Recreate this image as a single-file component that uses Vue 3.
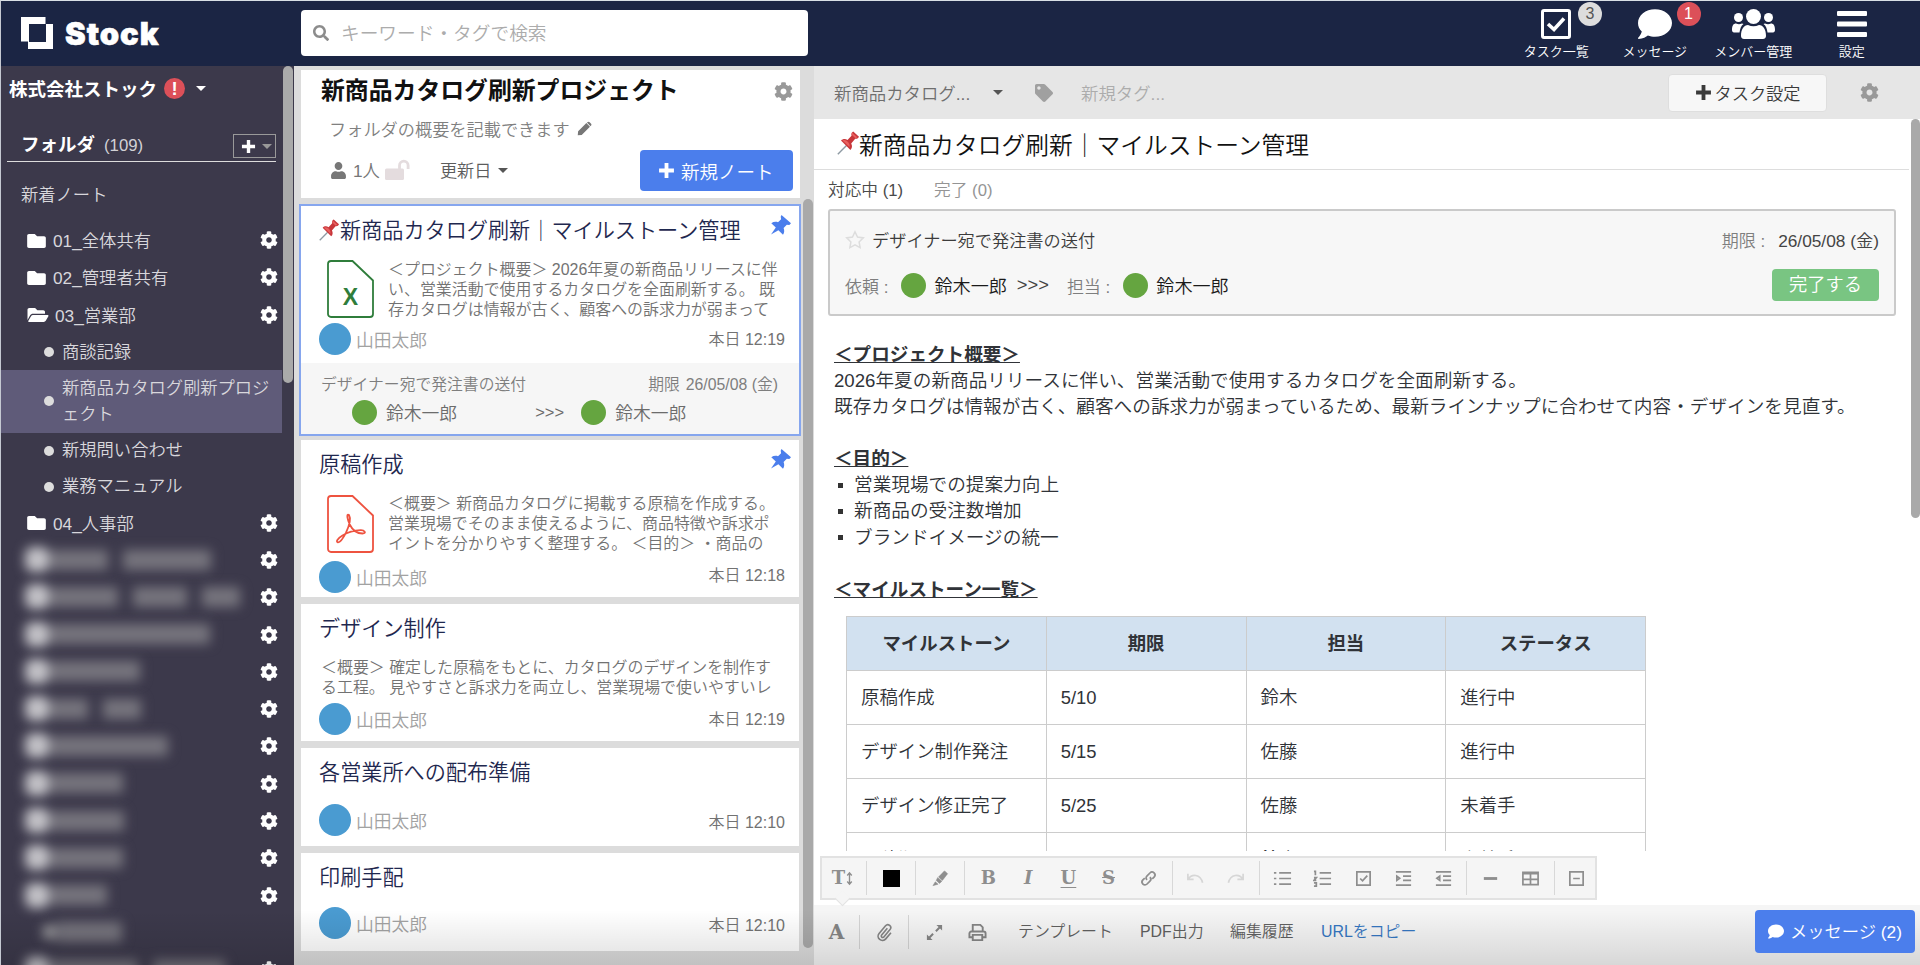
<template>
  <div class="page">
    <header class="header-bar">
      <div class="logo">
        <svg class="logo-mark" viewBox="0 0 32 32">
          <path d="M0 0H25V7H32V32H7V25H0ZM8 7V25H25V7Z" fill="#fff" fill-rule="evenodd" />
          <path d="M25 0V7M0 25H7" stroke="#1b2544" stroke-width="1" />
        </svg>
        <span class="logo-text">Stock</span>
      </div>
      <div class="search-box">
        <Icon name="search" class="search-icon" />
        <span>キーワード・タグで検索</span>
      </div>
      <nav class="header-nav">
        <div class="nav-item">
          <svg class="nav-icon" viewBox="0 0 30 30" fill="none" stroke="#fff">
            <rect x="1.500" y="1.500" width="27" height="27" rx="1.500" stroke-width="3" />
            <path d="M7 15l6 5.500L23 9.500" stroke-width="3.600" />
          </svg>
          <span class="badge gray">3</span>
          <span>タスク一覧</span>
        </div>
        <div class="nav-item">
          <Icon name="comment" class="nav-icon bubble" />
          <span class="badge red">1</span>
          <span>メッセージ</span>
        </div>
        <div class="nav-item">
          <svg class="nav-icon members" viewBox="0 0 43 30" fill="#fff">
            <circle cx="21.500" cy="7.500" r="7.500" />
            <circle cx="6.500" cy="8.500" r="4.500" />
            <circle cx="36.500" cy="8.500" r="4.500" />
            <path d="M9 27c0-7 3-11 7-11 3.500 1.700 7.500 1.700 11 0 4 0 7 4 7 11 0 2-1.500 3-3 3H12c-1.500 0-3-1-3-3z" />
            <path d="M0 21c0-4.500 1.500-6.500 4-6.500 2 1 4 1 6 0l1.500.6C9 17 8 20 7.500 23.500H2C.8 23.500 0 22.500 0 21zM43 21c0-4.500-1.500-6.500-4-6.500-2 1-4 1-6 0l-1.500.6C34 17 35 20 35.500 23.500H41c1.200 0 2-1 2-2.500z" />
          </svg>
          <span>メンバー管理</span>
        </div>
        <div class="nav-item">
          <svg class="nav-icon" viewBox="0 0 30 30" fill="#fff">
            <rect y="2" width="30" height="5" rx="1" />
            <rect y="12.500" width="30" height="5" rx="1" />
            <rect y="23" width="30" height="5" rx="1" />
          </svg>
          <span>設定</span>
        </div>
      </nav>
    </header>

    <div class="columns">
      <aside class="sidebar">
        <div class="sidebar-scroll">
          <div class="company">
            <span>株式会社ストック</span>
            <span class="alert">!</span>
            <span class="caret"></span>
          </div>
          <div class="folder-head">
            <span class="folder-title">フォルダ</span>
            <span class="folder-count">(109)</span>
            <div class="add-folder">
              <Icon name="plus" class="add-icon" />
              <span class="caret dim"></span>
            </div>
          </div>
          <div class="new-notes">新着ノート</div>
          <template v-for="folder in folders" :key="folder.name">
            <div class="folder-row">
              <Icon :name="folder.open ? 'folderOpen' : 'folder'" :class="folder.open ? 'folder-icon open' : 'folder-icon'" />
              <span class="folder-name">{{ folder.name }}</span>
              <Icon name="cog" class="row-cog" />
            </div>
            <div v-for="sub in folder.children" :key="sub" class="sub-row" :class="{ active: sub === activeFolder }">
              <span class="dot"></span>
              <span class="sub-name">{{ sub }}</span>
            </div>
          </template>
          <div v-for="(row, i) in maskedRows" :key="i" class="folder-row masked">
            <div class="mask" :class="{ child: row.child }">
              <span class="mask-icon"></span>
              <span v-for="(w, j) in row.widths" :key="j" class="mask-text" :style="{ width: w + 'px' }"></span>
            </div>
            <Icon v-if="!row.child" name="cog" class="row-cog" />
          </div>
        </div>
        <div class="sidebar-thumb"></div>
      </aside>

      <section class="note-list">
        <div class="cards">
          <div class="list-head">
            <div class="list-title">
              <h1>新商品カタログ刷新プロジェクト</h1>
              <Icon name="cog" class="gray-cog" />
            </div>
            <div class="list-desc">
              <span>フォルダの概要を記載できます</span>
              <Icon name="pencil" class="pencil" />
            </div>
            <div class="list-tools">
              <Icon name="user" class="user-icon" />
              <span class="user-count">1人</span>
              <svg class="lock" viewBox="0 0 25 21">
                <rect y="9.500" width="19" height="11.500" rx="1.500" fill="#e4dcde" />
                <path d="M14.500 10V6.500a4.300 4.300 0 0 1 8.600 0V10" fill="none" stroke="#e4dcde" stroke-width="2.800" />
              </svg>
              <span class="sort">更新日</span>
              <span class="caret dark"></span>
              <div class="new-note">
                <Icon name="plus" class="new-plus" />
                <span>新規ノート</span>
              </div>
            </div>
          </div>

          <article v-for="note in notes" :key="note.title" class="card" :class="note.kind">
            <div class="card-title">
              <PushPin v-if="note.kind === 'selected'" class="emoji" />
              <span>{{ note.title }}</span>
              <Icon v-if="note.pinned" name="pin" class="pin" />
            </div>
            <div v-if="note.preview" class="card-body">
              <svg v-if="note.file" class="file-icon" :class="note.file" viewBox="0 0 47 58" fill="none" stroke="currentColor" stroke-width="1.800">
                <path d="M4 1H25.500L46 20.500V54a3 3 0 0 1-3 3H4a3 3 0 0 1-3-3V4a3 3 0 0 1 3-3z" />
                <text v-if="note.file === 'excel'" x="23.500" y="45" text-anchor="middle" class="file-letter">X</text>
                <path v-else d="M22 20c-3-2-1.500 5 1 10 3 6 8 8.500 12.500 8.500s2-3.500-2-3.300c-6 .3-13 2.300-18 5.300-5 3-6.500 6-5 6.700 2 .8 5.500-3.500 8.500-9.500 3-6.500 5.200-14 3-17.700z" />
              </svg>
              <div class="preview">
                <div v-for="line in note.preview" :key="line">{{ line }}</div>
              </div>
            </div>
            <div class="card-meta">
              <span class="avatar blue"></span>
              <span class="author">山田太郎</span>
              <span class="time">{{ note.time }}</span>
            </div>
            <div v-if="note.task" class="card-task">
              <div class="task-line">
                <span>{{ note.task }}</span>
                <span class="due"><span>期限</span>26/05/08 (金)</span>
              </div>
              <div class="task-people">
                <span class="avatar green"></span>
                <span class="from">鈴木一郎</span>
                <span class="arrows">&gt;&gt;&gt;</span>
                <span class="avatar green"></span>
                <span>鈴木一郎</span>
              </div>
            </div>
          </article>
        </div>
        <div class="list-thumb"></div>
      </section>

      <main class="note">
        <div class="note-bar">
          <span class="crumb">新商品カタログ...</span>
          <span class="caret dark"></span>
          <Icon name="tag" class="tag-icon" />
          <span class="new-tag">新規タグ...</span>
          <div class="task-button">
            <Icon name="plus" class="task-plus" />
            <span>タスク設定</span>
          </div>
          <Icon name="cog" class="gray-cog" />
        </div>

        <div class="note-main">
          <div class="note-scroll">
            <h2 class="note-title"><PushPin class="emoji" />新商品カタログ刷新｜マイルストーン管理</h2>
            <div class="tabs">
              <span>対応中 (1)</span>
              <span class="done">完了 (0)</span>
            </div>
            <div class="task-card">
              <div class="task-top">
                <svg class="star" viewBox="0 0 20 20" fill="none" stroke="#ddd" stroke-width="1.500">
                  <path d="M10 1.800l2.500 5.300 5.800.8-4.200 4 1 5.800-5.100-2.800-5.100 2.800 1-5.800-4.200-4 5.800-.8z" />
                </svg>
                <span class="task-name">デザイナー宛で発注書の送付</span>
                <span class="label">期限 :</span>
                <span class="date">26/05/08 (金)</span>
              </div>
              <div class="task-bottom">
                <span class="label">依頼 :</span>
                <span class="avatar green"></span>
                <span class="person">鈴木一郎</span>
                <span class="gt">&gt;&gt;&gt;</span>
                <span class="label">担当 :</span>
                <span class="avatar green"></span>
                <span class="person">鈴木一郎</span>
                <div class="complete">完了する</div>
              </div>
            </div>
            <div class="document">
              <h3>＜プロジェクト概要＞</h3>
              <p>2026年夏の新商品リリースに伴い、営業活動で使用するカタログを全面刷新する。</p>
              <p>既存カタログは情報が古く、顧客への訴求力が弱まっているため、最新ラインナップに合わせて内容・デザインを見直す。</p>
              <h3 class="spaced">＜目的＞</h3>
              <ul>
                <li>営業現場での提案力向上</li>
                <li>新商品の受注数増加</li>
                <li>ブランドイメージの統一</li>
              </ul>
              <h3 class="spaced">＜マイルストーン一覧＞</h3>
              <table>
                <thead>
                  <tr>
                    <th>マイルストーン</th>
                    <th>期限</th>
                    <th>担当</th>
                    <th>ステータス</th>
                  </tr>
                </thead>
                <tbody>
                  <tr v-for="row in milestones" :key="row[0]">
                    <td v-for="(cell, i) in row" :key="i">{{ cell }}</td>
                  </tr>
                </tbody>
              </table>
            </div>
          </div>
          <div class="note-thumb"></div>
        </div>

        <div class="editor">
          <div class="toolbar">
            <div v-for="(group, i) in tools" :key="i" class="tool-group" :class="{ narrow: group.length === 1 }">
              <span v-for="tool in group" :key="tool" class="tool" :class="tool">
                <template v-if="letters[tool]">{{ letters[tool] }}</template>
                <svg v-if="toolPaths[tool]" viewBox="0 0 20 20" fill="none" stroke="currentColor" stroke-width="1.800">
                  <path :d="toolPaths[tool]" />
                </svg>
              </span>
            </div>
          </div>
        </div>

        <footer class="bottom-bar">
          <span class="foot-icon font-a">A</span>
          <span class="foot-icon clip">
            <svg viewBox="0 0 20 20" fill="none" stroke="currentColor" stroke-width="1.700">
              <path d="M13 5.500l-6 7.200a1.500 1.500 0 0 0 2.300 2l6.500-7.800a3 3 0 0 0-4.700-3.900L4.300 11a4.500 4.500 0 0 0 7 5.700l5.500-6.500" />
            </svg>
          </span>
          <span class="foot-icon expand">
            <svg viewBox="0 0 20 20" fill="currentColor">
              <path d="M12 2h6v6l-2.200-2.200-3.600 3.600-1.500-1.500 3.600-3.600zM8 18H2v-6l2.200 2.200 3.600-3.600 1.500 1.500-3.600 3.600z" />
            </svg>
          </span>
          <span class="foot-icon print">
            <svg viewBox="0 0 20 20" fill="none" stroke="currentColor" stroke-width="2">
              <path d="M5 9V2h8l2.500 2.500V9M4.500 15H1.500v-4a2 2 0 0 1 2-2h13a2 2 0 0 1 2 2v4h-3M5 12.500h10V18H5z" />
            </svg>
          </span>
          <span class="foot-link template-link">テンプレート</span>
          <span class="foot-link pdf-link">PDF出力</span>
          <span class="foot-link history-link">編集履歴</span>
          <span class="foot-link url-link">URLをコピー</span>
          <div class="message-button">
            <Icon name="comment" class="message-icon" />
            <span>メッセージ (2)</span>
          </div>
        </footer>
      </main>
    </div>
    <div class="bottom-shade"></div>
  </div>
</template>

<script setup>
import { h, ref } from 'vue'

const iconPaths = {
  search: ['0 0 512 512', 'M505 442.700L405.300 343c-4.500-4.500-10.600-7-17-7H372c27.600-35.300 44-79.700 44-128C416 93.100 322.900 0 208 0S0 93.100 0 208s93.100 208 208 208c48.300 0 92.700-16.400 128-44v16.300c0 6.400 2.500 12.500 7 17l99.700 99.700c9.400 9.400 24.600 9.400 33.900 0l28.300-28.300c9.400-9.400 9.400-24.600.1-34zM208 336c-70.700 0-128-57.200-128-128 0-70.700 57.200-128 128-128 70.700 0 128 57.200 128 128 0 70.700-57.200 128-128 128z'],
  comment: ['0 32 512 448', 'M256 32C114.600 32 0 125.100 0 240c0 49.600 21.400 95 57 130.700C44.500 421.100 2.700 466 2.200 466.500c-2.200 2.300-2.800 5.700-1.500 8.700S4.800 480 8 480c66.300 0 116-31.800 140.600-51.400 32.700 12.300 69 19.400 107.400 19.400 141.400 0 256-93.100 256-208S397.400 32 256 32z'],
  cog: ['0 0 512 512', 'M487.400 315.700l-42.600-24.600c4.300-23.200 4.300-47 0-70.200l42.600-24.600c4.900-2.800 7.100-8.600 5.500-14-11.100-35.600-30-67.800-54.700-94.600-3.800-4.100-10-5.100-14.800-2.300L380.800 110c-17.900-15.400-38.500-27.300-60.800-35.100V25.800c0-5.600-3.900-10.500-9.400-11.700-36.700-8.200-74.300-7.800-109.200 0-5.500 1.200-9.400 6.100-9.400 11.700V75c-22.200 7.900-42.800 19.800-60.800 35.100L88.700 85.500c-4.900-2.800-11-1.900-14.800 2.300-24.700 26.700-43.600 58.900-54.700 94.600-1.700 5.400.6 11.200 5.500 14L67.300 221c-4.300 23.200-4.300 47 0 70.200l-42.600 24.600c-4.900 2.800-7.100 8.600-5.500 14 11.100 35.600 30 67.800 54.700 94.600 3.800 4.100 10 5.100 14.800 2.300l42.600-24.600c17.900 15.400 38.500 27.300 60.800 35.100v49.200c0 5.600 3.900 10.500 9.400 11.700 36.700 8.200 74.300 7.800 109.200 0 5.500-1.200 9.400-6.100 9.400-11.700v-49.200c22.200-7.900 42.800-19.800 60.800-35.100l42.600 24.600c4.900 2.800 11 1.900 14.800-2.300 24.700-26.700 43.600-58.900 54.700-94.600 1.500-5.500-.7-11.300-5.600-14.100zM256 336c-44.100 0-80-35.900-80-80s35.900-80 80-80 80 35.900 80 80-35.900 80-80 80z'],
  folder: ['0 64 512 384', 'M464 128H272l-64-64H48C21.490 64 0 85.490 0 112v288c0 26.510 21.490 48 48 48h416c26.510 0 48-21.490 48-48V176c0-26.510-21.490-48-48-48z'],
  folderOpen: ['0 64 576 384', 'M572.694 292.093L500.270 416.248A63.997 63.997 0 0 1 444.989 448H45.025c-18.523 0-30.064-20.093-20.731-36.093l72.424-124.155A64 64 0 0 1 152 256h399.964c18.523 0 30.064 20.093 20.730 36.093zM152 224h328v-48c0-26.510-21.490-48-48-48H272l-64-64H48C21.490 64 0 85.490 0 112v278.046l69.077-118.418C86.214 242.250 117.989 224 152 224z'],
  user: ['0 0 448 512', 'M224 240c66 0 116-53 116-120S290 0 224 0 108 53 108 120s50 120 116 120zM314 280h-17c-46 21-100 21-146 0h-17C60 280 0 348 0 422v42c0 26 21 48 48 48h352c27 0 48-22 48-48v-42c0-74-60-142-134-142z'],
  tag: ['0 0 512 512', 'M0 252.118V48C0 21.490 21.490 0 48 0h204.118a48 48 0 0 1 33.941 14.059l211.882 211.882c18.745 18.745 18.745 49.137 0 67.882L293.823 497.941c-18.745 18.745-49.137 18.745-67.882 0L14.059 286.059A48 48 0 0 1 0 252.118zM112 64c-26.510 0-48 21.490-48 48s21.490 48 48 48 48-21.490 48-48-21.490-48-48-48z'],
  plus: ['0 0 16 16', 'M6.200 1h3.600v5.200H15v3.600H9.800V15H6.200V9.800H1V6.200h5.200z'],
  pencil: ['0 0 16 16', 'M10 2.200L13.800 6 5 14.800.8 15.300 1.200 11zM11 1.300c.8-.8 1.700-.8 2.500 0l1.300 1.300c.8.8.8 1.700 0 2.500l-.4.400L10.600 1.700z'],
  pin: ['0 0 20 20', 'M10.500 0L20 8.200 18.300 10l-2.500-.2-3.200 3.200c1 2.300.8 4.800-.6 6.800L7.400 15.200 0 19.600 4.800 12.600.3 8.200C2.500 6.800 4.800 6.500 7 7.300l3.100-3-.4-2.500z']
}

const Icon = (props) => h('svg', { viewBox: iconPaths[props.name][0], fill: 'currentColor' }, [h('path', { d: iconPaths[props.name][1] })])
Icon.props = ['name']

// red push pin shown in front of pinned titles
const PushPin = () => h('svg', { viewBox: '0 0 22 24' }, [
  h('path', { d: 'M9.500 14.500L.8 23.300', stroke: '#8e9aa3', 'stroke-width': 1.4 }),
  h('path', { d: 'M4 9.500c2-2 4.500-2 6.500-.5l4-4.300c-.5-2 .3-3.500 1.700-4.200L22 5.800c-.6 1.500-2 2.300-3.800 2l-4 4.700c1.300 2.300 1 4.800-.8 6.500z', fill: '#c8363a' }),
  h('path', { d: 'M15 1.500l5.500 5-2.300.5-3.500-3.200zM5.500 9.500c2-1 4 0 5.500 1.500s2 3.500 1.500 5z', fill: '#e8605f' })
])

const activeFolder = ref('新商品カタログ刷新プロジェクト')

const folders = [
  { name: '01_全体共有' },
  { name: '02_管理者共有' },
  {
    name: '03_営業部',
    open: true,
    children: ['商談記録', '新商品カタログ刷新プロジェクト', '新規問い合わせ', '業務マニュアル']
  },
  { name: '04_人事部' }
]

const maskedRows = [
  { widths: [58, 88] },
  { widths: [68, 54, 38] },
  { widths: [160] },
  { widths: [90] },
  { widths: [38, 38] },
  { widths: [118] },
  { widths: [73] },
  { widths: [74] },
  { widths: [73] },
  { widths: [57] },
  { widths: [66], child: true },
  { widths: [88, 72] }
]

const notes = [
  {
    title: '新商品カタログ刷新｜マイルストーン管理',
    kind: 'selected',
    pinned: true,
    file: 'excel',
    preview: [
      '＜プロジェクト概要＞ 2026年夏の新商品リリースに伴',
      'い、営業活動で使用するカタログを全面刷新する。 既',
      '存カタログは情報が古く、顧客への訴求力が弱まって'
    ],
    time: '本日 12:19',
    task: 'デザイナー宛で発注書の送付'
  },
  {
    title: '原稿作成',
    kind: 'with-file',
    pinned: true,
    file: 'pdf',
    preview: [
      '＜概要＞ 新商品カタログに掲載する原稿を作成する。',
      '営業現場でそのまま使えるように、商品特徴や訴求ポ',
      'イントを分かりやすく整理する。 ＜目的＞ ・商品の'
    ],
    time: '本日 12:18'
  },
  {
    title: 'デザイン制作',
    kind: 'text-only',
    preview: [
      '＜概要＞ 確定した原稿をもとに、カタログのデザインを制作す',
      'る工程。 見やすさと訴求力を両立し、営業現場で使いやすいレ'
    ],
    time: '本日 12:19'
  },
  { title: '各営業所への配布準備', kind: 'plain', time: '本日 12:10' },
  { title: '印刷手配', kind: 'plain', time: '本日 12:10' }
]

const milestones = [
  ['原稿作成', '5/10', '鈴木', '進行中'],
  ['デザイン制作発注', '5/15', '佐藤', '進行中'],
  ['デザイン修正完了', '5/25', '佐藤', '未着手'],
  ['入稿期限', '6/5', '鈴木', '未着手']
]

const tools = [
  ['size'],
  ['color'],
  ['marker'],
  ['bold', 'italic', 'underline', 'strike', 'link'],
  ['undo', 'redo'],
  ['list', 'ordered', 'check', 'indent', 'outdent'],
  ['line', 'table'],
  ['fold']
]

const letters = { size: 'T', bold: 'B', italic: 'I', underline: 'U', strike: 'S' }

const toolPaths = {
  size: 'M10 3v14M7 6L10 2.500l3 3.500M7 14L10 17.500l3-3.500',
  marker: 'M8 8.500l6-6.500 3.500 3-5.500 7zM8.600 7.800L15 3l1.500 1.800-5.600 6zM11 6l4-3 1.500 2-4.500 5zM7 9l4.500 3.800-2.500 2.400L5.500 12zM4.500 13.500L7.500 16 2 17.500z',
  link: 'M8.500 11.500c-1.500-1.500-1.300-3 0-4.300l3-3a3 3 0 0 1 4.400 4.300l-2 2M11.500 8.500c1.500 1.500 1.300 3 0 4.300l-3 3a3 3 0 0 1-4.400-4.300l2-2',
  undo: 'M2 5v6h6M2.500 10.500C6 5 15 5 17.500 14.500',
  redo: 'M18 5v6h-6M17.500 10.500C14 5 5 5 2.500 14.500',
  list: 'M6.500 4H19M6.500 10H19M6.500 16H19M1 4h2.500M1 10h2.500M1 16h2.500',
  ordered: 'M7 4h12M7 10h12M7 16h12M1 2.500h1.500v4M1 9h2.500L1 12h2.500M1 14.500h2.500v3.500H1',
  check: 'M3 3h14v14H3zM6.500 10l2.500 2.500 5-5.500',
  indent: 'M2 3h16M9.500 7.500H18M9.500 12H18M2 17h16M3 7.500l3 2.300L3 12z',
  outdent: 'M2 3h16M9.500 7.500H18M9.500 12H18M2 17h16M6 7.500L3 9.800 6 12z',
  line: 'M3 10h14',
  table: 'M2 3.500h16v13H2zM2 5h16M2 11h16M10 5v11.500',
  fold: 'M3 3h14v14H3zM6.500 10h7'
}
</script>

<style>
body {
  margin: 0;
  overflow: hidden;
}
</style>

<style scoped>
* {
  box-sizing: border-box;
}

.page {
  position: relative;
  width: 1920px;
  height: 965px;
  overflow: hidden;
  display: flex;
  flex-direction: column;
  border-top: 1px solid #d9e0e6;
  border-left: 1px solid #c5c9d2;
  font-family: "Liberation Sans", "Noto Sans CJK JP", sans-serif;
  font-weight: 350;
  white-space: nowrap;
  color: #444;
}

h1,
h2,
h3,
p,
ul {
  margin: 0;
  padding: 0;
}

svg {
  flex: none;
  display: block;
}

/* Header */
.header-bar {
  height: 65px;
  flex: none;
  background-color: #1b2544;
  display: flex;
  color: #fff;
}

.logo {
  width: 300px;
  padding: 16px 0 0 20px;
  display: flex;
}

.logo-mark {
  width: 32px;
  height: 32px;
}

.logo-text {
  font-family: "Inter", sans-serif;
  font-weight: 900;
  font-size: 31px;
  line-height: 33px;
  letter-spacing: 1px;
  margin-left: 12px;
  -webkit-text-stroke: 0.6px #fff;
}

.search-box {
  width: 507px;
  height: 46px;
  margin-top: 9px;
  background-color: #fff;
  border-radius: 4px;
  display: flex;
  align-items: center;
  padding-left: 12px;
  font-size: 18.7px;
  color: #acacac;
}

.search-box span {
  margin-top: -4px;
}

.search-icon {
  width: 16px;
  height: 16px;
  color: #8c8c8c;
  margin-right: 12px;
}

.header-nav {
  display: flex;
  margin-left: auto;
  margin-right: 19px;
}

.nav-item {
  position: relative;
  width: 98.5px;
  display: flex;
  flex-direction: column;
  align-items: center;
  padding-top: 8px;
  font-size: 13px;
  line-height: 16px;
}

.nav-icon {
  width: 30px;
  height: 30px;
  margin-bottom: 5px;
}

.nav-icon.bubble {
  width: 34px;
}

.nav-icon.members {
  width: 43px;
}

.badge {
  position: absolute;
  top: 1px;
  left: 71px;
  width: 24px;
  height: 24px;
  border-radius: 50%;
  font-size: 16px;
  line-height: 24px;
  text-align: center;
}

.badge.gray {
  background-color: #ddd;
  color: #555;
}

.badge.red {
  background-color: #dc5059;
}

.columns {
  flex: 1;
  display: flex;
  min-height: 0;
}

.caret {
  flex: none;
  width: 0;
  height: 0;
  border: 5px solid transparent;
  border-top-color: #fff;
  border-bottom: none;
}

.caret.dim {
  border-top-color: #999;
}

.caret.dark {
  border-top-color: #555;
}

/* Sidebar */
.sidebar {
  width: 293px;
  flex: none;
  display: flex;
  background-color: #3c394b;
  overflow: hidden;
}

.sidebar-scroll {
  width: 281px;
  color: #d8d7dc;
  font-size: 17.3px;
}

.sidebar-thumb {
  width: 10px;
  height: 317px;
  margin-left: 1px;
  border-radius: 5px;
  background-color: #aaa;
}

.company {
  display: flex;
  align-items: center;
  height: 24px;
  margin-top: 10px;
  padding-left: 8px;
  color: #fff;
  font-weight: bold;
  font-size: 18.5px;
}

.alert {
  width: 21px;
  height: 21px;
  margin: 0 11px 0 7px;
  border-radius: 50%;
  background-color: #dc5059;
  text-align: center;
  line-height: 21px;
}

.folder-head {
  display: flex;
  align-items: center;
  width: 269px;
  margin: 31px 0 0 6px;
  padding: 0 0 2px 14px;
  height: 31px;
  border-bottom: 1px solid #ddd;
  color: #fff;
}

.folder-title {
  font-size: 18.5px;
  font-weight: bold;
  margin-top: -4px;
}

.folder-count {
  margin: 2px 0 0 9px;
  color: #d2d1d6;
  font-size: 16.8px;
}

.add-folder {
  width: 43px;
  height: 24px;
  margin: 2px 0 0 auto;
  border: 1px solid #999;
  display: flex;
  align-items: center;
  padding-left: 7px;
  gap: 6px;
}

.add-icon {
  width: 15px;
  height: 15px;
}

.new-notes {
  height: 60px;
  line-height: 66px;
  padding-left: 20px;
}

.folder-row {
  height: 37.3px;
  display: flex;
  align-items: center;
  padding-left: 26px;
}

.folder-icon {
  width: 19px;
  height: 14px;
  color: #fff;
  margin-right: 7px;
}

.folder-icon.open {
  width: 22px;
  margin-right: 6px;
}

.folder-name {
  margin-top: -2px;
}

.row-cog {
  width: 18px;
  height: 18px;
  color: #fff;
  margin: -1px 4px 0 auto;
}

.sub-row {
  height: 35.9px;
  display: flex;
  align-items: center;
  padding-left: 43px;
}

.sub-row.active {
  height: 63px;
  background-color: #5f5b79;
}

.sub-name {
  white-space: normal;
  width: 214px;
  line-height: 26.5px;
}

.dot {
  flex: none;
  width: 10px;
  height: 10px;
  margin-right: 8px;
  border-radius: 50%;
  background-color: #ddd;
}

.masked {
  padding-left: 0;
}

.mask {
  display: flex;
  align-items: center;
  gap: 15px;
  margin-top: -2px;
  padding-left: 24px;
  filter: blur(6px);
}

.mask.child {
  padding-left: 42px;
}

.mask-icon {
  width: 24px;
  height: 25px;
  margin-right: -14px;
  border-radius: 8px;
  background-color: #c4c3c8;
}

.child .mask-icon {
  width: 12px;
  height: 14px;
  background-color: #aaa;
}

.mask-text {
  height: 20px;
  background-color: #76747d;
}

/* Note list */
.note-list {
  width: 520px;
  flex: none;
  display: flex;
  background-color: #dcdcdc;
}

.cards {
  width: 509px;
  padding-left: 7px;
}

.list-head {
  width: 499px;
  height: 128px;
  margin-top: 4px;
  padding: 7px 7px 0 20px;
  background-color: #fff;
}

.list-title {
  display: flex;
  align-items: center;
  justify-content: space-between;
  height: 28px;
}

.list-title h1 {
  font-size: 23.85px;
  line-height: 28px;
  color: #111;
}

.gray-cog {
  width: 19px;
  height: 19px;
  color: #999;
}

.list-desc {
  display: flex;
  align-items: center;
  height: 24px;
  margin-top: 11px;
  padding-left: 8px;
  font-size: 17.2px;
  color: #808080;
}

.pencil {
  width: 15px;
  height: 15px;
  margin-left: 7px;
  color: #777;
}

.list-tools {
  display: flex;
  align-items: center;
  height: 41px;
  margin-top: 10px;
  padding-left: 10px;
  color: #5c5c5c;
}

.user-icon {
  width: 15px;
  height: 17px;
  color: #777;
}

.user-count {
  margin: -2px 0 0 7px;
  font-size: 17.3px;
  color: #777;
}

.lock {
  width: 25px;
  height: 21px;
  margin: -3px 30px 0 5px;
}

.sort {
  margin: -2px 7px 0 0;
  font-size: 17.2px;
}

.new-note {
  width: 153px;
  height: 41px;
  margin-left: auto;
  border-radius: 4px;
  background-color: #4b7eec;
  color: #fff;
  font-size: 18.5px;
  display: flex;
  align-items: center;
  padding-left: 18px;
}

.new-plus {
  width: 17px;
  height: 17px;
  margin-right: 6px;
}

.card {
  width: 498px;
  margin-bottom: 7px;
  padding: 0 8px 0 18px;
  background-color: #fff;
}

.card.selected {
  width: 502px;
  height: 232px;
  margin: 6px 0 4px -2px;
  border: 2px solid #86a6ee;
}

.with-file {
  height: 157px;
}

.text-only {
  height: 137px;
}

.plain {
  height: 98px;
}

.plain:last-child {
  margin-bottom: 0;
}

.card-title {
  display: flex;
  align-items: flex-start;
  height: 54px;
  padding-top: 10px;
  font-size: 21.15px;
  line-height: 30px;
  color: #1f284f;
}

.card-title .emoji {
  width: 20px;
  height: 22px;
  margin: 3px 1px 0 0;
}

.pin {
  width: 20px;
  height: 20px;
  margin: -1px 0 0 auto;
  color: #4b7eec;
}

.card-body {
  display: flex;
  height: 61px;
  font-size: 15.95px;
  line-height: 20.1px;
  color: #727272;
}

.file-icon {
  width: 47px;
  height: 58px;
  margin: 1px 14px 0 8px;
}

.file-icon.excel {
  color: #2f7d3b;
}

.file-icon.pdf {
  color: #ee5340;
}

.file-letter {
  font-size: 23px;
  font-weight: bold;
  fill: #2f7d3b;
  stroke: none;
}

.text-only .card-body {
  height: 45px;
  padding-left: 2px;
}

.card-meta {
  display: flex;
  align-items: center;
  height: 32px;
  margin-top: 3px;
}

.with-file .card-meta {
  margin-top: 6px;
}

.plain .card-meta {
  margin-top: 2px;
}

.text-only .card-meta {
  margin-top: 0;
}

.plain:last-child .card-meta {
  margin-top: 0;
}

.selected .card-title {
  height: 53px;
}

.selected .preview {
  margin-top: 1px;
}

.avatar {
  flex: none;
  border-radius: 50%;
}

.avatar.blue {
  width: 32px;
  height: 32px;
  background-color: #4a9bd1;
}

.avatar.green {
  width: 25px;
  height: 25px;
  background-color: #65a540;
}

.author {
  margin: -1px 0 0 5px;
  font-size: 17.8px;
  color: #a2a2a2;
}

.time {
  margin: -2px 6px 0 auto;
  font-size: 16px;
  color: #727272;
}

.with-file .time {
  margin-top: -7px;
}

.plain .time {
  margin-top: 1px;
}

.card-task {
  margin: 8px -8px 0 -18px;
  height: 71px;
  padding: 12px 21px 0 20px;
  background-color: #f6f6f6;
  color: #7e7e7e;
  font-size: 15.8px;
}

.task-line {
  display: flex;
  justify-content: space-between;
  line-height: 20px;
}

.due {
  display: flex;
  gap: 6px;
}

.task-people {
  display: flex;
  align-items: center;
  height: 34px;
  padding-left: 31px;
  font-size: 17.8px;
  color: #6c6c6c;
}

.task-people .avatar {
  margin-right: 9px;
}

.arrows {
  width: 46px;
  margin-left: 78px;
  font-size: 16.5px;
}

.list-thumb {
  width: 10px;
  height: 749px;
  margin-top: 133px;
  border-radius: 5px;
  background-color: #a9a9a9;
}

/* Note */
.note {
  flex: 1;
  min-width: 0;
  display: flex;
  flex-direction: column;
  background-color: #fff;
}

.note-bar {
  height: 53px;
  flex: none;
  padding: 0 41px 0 20px;
  background-color: #e6e6e6;
  display: flex;
  align-items: center;
  font-size: 17.4px;
}

.crumb {
  width: 159px;
  color: #6e6e6e;
}

.tag-icon {
  width: 18px;
  height: 18px;
  margin: 0 28px 0 32px;
  color: #a0a0a0;
}

.new-tag {
  color: #acacac;
}

.task-button {
  width: 159px;
  height: 38px;
  margin: 0 33px 0 auto;
  border: 1px solid #dedede;
  border-radius: 4px;
  background-color: #f7f7f7;
  color: #3a3a3a;
  font-size: 17.2px;
  display: flex;
  align-items: center;
  justify-content: center;
  gap: 3px;
}

.task-plus {
  width: 17px;
  height: 17px;
}

.note-main {
  flex: none;
  height: 732px;
  display: flex;
  overflow: hidden;
}

.note-scroll {
  width: 1097px;
}

.note-thumb {
  width: 9px;
  height: 399px;
  border-radius: 5px;
  background-color: #a9a9a9;
}

.note-title {
  display: flex;
  align-items: center;
  width: 1095px;
  height: 51px;
  padding: 0 0 2px 23px;
  border-bottom: 1px solid #ddd;
  font-weight: 350;
  font-size: 23.75px;
  color: #111;
}

.note-title .emoji {
  width: 22px;
  height: 24px;
}

.tabs {
  display: flex;
  gap: 31px;
  height: 39px;
  line-height: 41px;
  padding-left: 14px;
  font-size: 16.7px;
  color: #4a4a4a;
}

.done {
  color: #949494;
}

.task-card {
  width: 1068px;
  height: 107px;
  margin-left: 14px;
  border: 2px solid #cacaca;
  border-radius: 3px;
  background-color: #f7f7f7;
  padding: 16px 15px 0 15px;
}

.task-top,
.task-bottom {
  display: flex;
  align-items: center;
  font-size: 17.2px;
}

.task-top {
  height: 25px;
}

.star {
  width: 20px;
  height: 20px;
  margin-right: 7px;
}

.task-name {
  margin-right: auto;
  color: #3c3c3c;
}

.label {
  color: #7e7e7e;
  font-size: 17px;
}

.date {
  margin-left: 13px;
  font-size: 17.3px;
}

.task-bottom {
  height: 32px;
  margin-top: 17px;
}

.task-bottom .avatar {
  margin: 0 8px 0 13px;
}

.person {
  color: #1a1a1a;
  font-size: 18.1px;
}

.gt {
  margin: 0 18px 0 10px;
  font-size: 18.3px;
}

.complete {
  width: 107px;
  height: 32px;
  margin-left: auto;
  border-radius: 4px;
  background-color: #79c582;
  color: #fff;
  font-size: 18.3px;
  line-height: 32px;
  text-align: center;
}

.document {
  padding: 26px 0 0 20px;
  font-size: 18.65px;
  line-height: 26.1px;
  color: #303338;
}

.document h3 {
  font-size: 18.6px;
  text-decoration: underline;
}

.document .spaced {
  margin-top: 26px;
}

.document li {
  display: flex;
  align-items: center;
}

.document li::before {
  content: "";
  width: 5px;
  height: 5px;
  margin: 0 11px 0 4px;
  background-color: #333;
}

table {
  width: 800px;
  margin: 13px 0 0 12px;
  border-collapse: collapse;
  table-layout: fixed;
}

th,
td {
  height: 54px;
  padding: 1px 14px 0;
  border: 1px solid #ccc;
  font-size: 18.4px;
  text-align: left;
}

th {
  background-color: #d2e1f0;
  text-align: center;
}

/* Editor tools */
.editor {
  height: 54px;
  flex: none;
  padding: 5px 0 0 6px;
}

.toolbar {
  position: relative;
  width: 777px;
  height: 44px;
  border: 2px solid #e2e2e2;
  background-color: #f5f5f5;
  display: flex;
  align-items: center;
}

.toolbar::after {
  content: "";
  position: absolute;
  top: 35px;
  left: 15px;
  width: 10px;
  height: 10px;
  background-color: #f5f5f5;
  border: solid #e2e2e2;
  border-width: 0 1px 1px 0;
  transform: rotate(45deg);
}

.tool-group {
  display: flex;
  align-items: center;
  height: 34px;
  padding: 0 3px;
  border-right: 1px solid #d8d8d8;
}

.tool-group:last-child {
  border-right: none;
}

.tool-group.narrow {
  padding: 0 4px;
}

.tool {
  width: 40.1px;
  display: flex;
  justify-content: center;
  align-items: center;
  color: #8e8e8e;
  font-family: "DejaVu Serif", serif;
  font-weight: bold;
  font-size: 18px;
  line-height: 20px;
}

.tool svg {
  width: 19px;
  height: 19px;
}

.tool.size svg {
  width: 15px;
  margin: 0 -4px 0 -3px;
}

.tool.size {
  width: 36px;
  padding-right: 3px;
}

.marker svg path {
  fill: currentColor;
  stroke-width: 0.5;
}

.color::before {
  content: "";
  width: 17px;
  height: 17px;
  background-color: #000;
}

.italic {
  font-style: italic;
}

.underline {
  text-decoration: underline;
  text-underline-offset: 3px;
}

.strike {
  text-decoration: line-through;
}

.undo,
.redo {
  color: #d6d6d6;
}

.line svg {
  stroke-width: 3;
}

.tool.fold {
  width: 36px;
}

/* Bottom bar */
.bottom-bar {
  flex: 1;
  display: flex;
  align-items: flex-start;
  padding-top: 10px;
  background-color: #f5f5f5;
  font-size: 15.9px;
  line-height: 34px;
  color: #606060;
}

.foot-icon {
  height: 34px;
  display: flex;
  align-items: center;
  justify-content: center;
  color: #858585;
}

.foot-icon svg {
  width: 19px;
  height: 19px;
}

.font-a {
  width: 46px;
  font-family: "DejaVu Serif", serif;
  font-weight: bold;
  font-size: 20px;
  border-right: 1px solid #d4d4d4;
}

.clip {
  width: 49px;
  border-right: 1px solid #d4d4d4;
}

.expand {
  width: 50px;
}

.print {
  width: 36px;
}

.template-link {
  width: 122px;
  margin-left: 23px;
}

.pdf-link {
  width: 90px;
}

.history-link {
  width: 91px;
}

.url-link {
  color: #3577c2;
}

.message-button {
  position: relative;
  z-index: 2;
  width: 160px;
  height: 43px;
  margin: -5px 5px 0 auto;
  border-radius: 4px;
  background-color: #4b7eec;
  color: #fff;
  font-size: 17.3px;
  display: flex;
  align-items: center;
  padding-left: 13px;
}

.message-icon {
  width: 16px;
  height: 15px;
  margin-right: 6px;
}

.bottom-shade {
  position: absolute;
  left: 0;
  right: 0;
  bottom: 0;
  height: 55px;
  background: linear-gradient(rgba(0, 0, 0, 0), rgba(0, 0, 0, 0.12));
}
</style>
